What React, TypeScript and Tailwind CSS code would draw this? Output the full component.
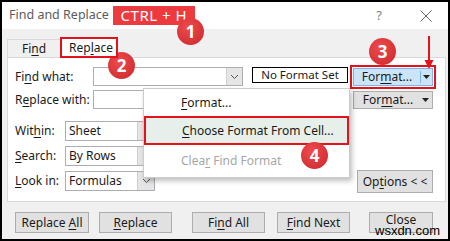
import React from 'react';

const U = ({ c }: { c: string }) => <span className="underline underline-offset-[2px]">{c}</span>;

const Chevron = () => (
  <svg width="9" height="6" viewBox="0 0 9 6" className="text-[#555]">
    <path d="M1 1 L4.5 4.5 L8 1" fill="none" stroke="currentColor" strokeWidth="1" />
  </svg>
);

const Caret = () => (
  <svg width="7" height="4" viewBox="0 0 7 4">
    <path d="M0 0 H7 L3.5 4 Z" fill="#222" />
  </svg>
);

interface IBtnProps {
  className: string;
  children: React.ReactNode;
}

const Btn = ({ className, children }: IBtnProps) => (
  <div className={`flex h-[21px] items-center justify-center border border-[#adadad] bg-[#e1e1e1] ${className}`}>
    <span>{children}</span>
  </div>
);

const Select = ({ value }: { value: string }) => (
  <div className="flex h-[20px] w-[90px] border border-[#abadb3] bg-white">
    <div className="flex-1 pl-[3px] leading-[18px]">{value}</div>
    <div className="flex w-[17px] items-center justify-center border-l border-[#cfcfcf] bg-[#e5e5e5]">
      <Chevron />
    </div>
  </div>
);

const Badge = ({ n, className }: { n: string; className: string }) => (
  <div
    className={`absolute flex h-[27px] w-[27px] items-center justify-center rounded-full bg-[radial-gradient(circle_at_40%_35%,#ef4a4c,#c9282d)] text-[17px] font-bold text-white ${className}`}
  >
    {n}
  </div>
);

const App = () => {
  return (
    <div className="relative h-[241px] w-[450px] overflow-hidden bg-white font-['Segoe_UI','Noto_Sans',sans-serif] text-[12px] text-[#1a1a1a]">
      <div className="flex h-[241px] w-[450px] flex-col border-2 border-black bg-[#f0f0f0]">
        {/* Title bar */}
        <div className="flex h-[27px] shrink-0 items-center bg-white pl-[7px] pr-[16px]">
          <span className="text-[12.5px] text-[#5c5c5c]">Find and Replace</span>
          <div className="ml-[4px] flex h-[19px] w-[82px] items-center justify-center bg-[#ec3a3e] text-[15px] tracking-[0.5px] text-white">
            CTRL + H
          </div>
          <span className="ml-auto text-[13px] text-[#808080]">?</span>
          <svg width="12" height="12" viewBox="0 0 12 12" className="ml-[38px]">
            <path d="M0.5 0.5 L11.5 11.5 M11.5 0.5 L0.5 11.5" stroke="#666" strokeWidth="1" />
          </svg>
        </div>

        {/* Tabs */}
        <div className="flex h-[28px] shrink-0 items-end pl-[5px]">
          <div className="flex h-[18px] w-[53px] items-center border-l border-t border-[#d9d9d9] pl-[14px]">
            <span>Fi<U c="n" />d</span>
          </div>
          <div className="relative z-10 -mb-[1px] flex h-[21px] w-[58px] items-center border-2 border-[#e3121b] bg-white pl-[7px]">
            <span>Rep<U c="l" />ace</span>
          </div>
        </div>

        {/* Panel */}
        <div className="ml-[5px] mr-[2px] flex h-[145px] shrink-0 justify-between border border-[#d9d9d9] bg-white pb-[8px] pl-[7px] pr-[12px] pt-[9px]">
          <div className="flex flex-col">
            <div className="flex h-[19px] items-start">
              <div className="w-[78px] leading-[19px]">Fi<U c="n" />d what:</div>
              <div className="flex h-[19px] w-[150px] border border-[#abadb3]">
                <div className="flex-1" />
                <div className="flex w-[16px] items-center justify-center border-l border-[#cfcfcf] bg-[#e5e5e5]">
                  <Chevron />
                </div>
              </div>
              <div className="ml-[9px] h-[16px] w-[96px] border border-black text-center text-[11.5px] leading-[14px]">No Format Set</div>
            </div>
            <div className="mt-[4px] flex h-[19px] items-start">
              <div className="w-[78px] leading-[19px]">R<U c="e" />place with:</div>
              <div className="h-[19px] w-[150px] border border-[#abadb3]" />
              <div className="ml-[9px] h-[16px] w-[96px] border border-black text-center text-[11.5px] leading-[14px]">No Format Set</div>
            </div>
            <div className="mt-[12px] flex items-center">
              <div className="w-[50px]">Wit<U c="h" />in:</div>
              <Select value="Sheet" />
            </div>
            <div className="mt-[5px] flex items-center">
              <div className="w-[50px]"><U c="S" />earch:</div>
              <Select value="By Rows" />
            </div>
            <div className="mt-[5px] flex items-center">
              <div className="w-[50px]"><U c="L" />ook in:</div>
              <Select value="Formulas" />
            </div>
          </div>

          <div className="flex flex-col items-end">
            <div className="mt-[1px] flex h-[18px] w-[80px] items-center border border-[#7eb4ea] bg-[#cce4f7] outline-2 outline-offset-1 outline-[#e3121b]">
              <div className="flex-1 text-center">For<U c="m" />at...</div>
              <div className="flex h-[12px] w-[12px] items-center justify-center border-l border-[#7eb4ea]">
                <Caret />
              </div>
            </div>
            <div className="mt-[5px] flex h-[18px] w-[80px] items-center border border-[#adadad] bg-[#e1e1e1]">
              <div className="flex-1 pl-[4px] text-center">For<U c="m" />at...</div>
              <div className="flex w-[14px] justify-center">
                <Caret />
              </div>
            </div>
            <Btn className="mt-auto h-[23px] w-[76px]">
              Op<U c="t" />ions &lt; &lt;
            </Btn>
          </div>
        </div>

        {/* Bottom buttons */}
        <div className="flex pl-[13px] pt-[10px]">
          <Btn className="w-[74px]">Replace <U c="A" />ll</Btn>
          <Btn className="ml-[10px] w-[73px]"><U c="R" />eplace</Btn>
          <Btn className="ml-[20px] w-[73px]">Fi<U c="n" />d All</Btn>
          <Btn className="ml-[12px] w-[73px]"><U c="F" />ind Next</Btn>
          <Btn className="ml-[19px] w-[64px] pb-[5px]">Close</Btn>
        </div>
      </div>

      {/* Format dropdown menu */}
      <div className="absolute left-[143px] top-[88px] flex w-[207px] flex-col border border-[#cccccc] bg-white shadow-[2px_3px_5px_rgba(0,0,0,0.25)]">
        <div className="flex h-[27px] items-center pl-[37px]">
          <span><U c="F" />ormat...</span>
        </div>
        <div className="flex h-[29px] items-center border-2 border-[#e3121b] bg-[#e6efea] pl-[36px]">
          <span><U c="C" />hoose Format From Cell...</span>
        </div>
        <div className="flex h-[32px] items-center pl-[37px] text-[#a6a6a6]">
          <span>Clea<U c="r" /> Find Format</span>
        </div>
      </div>

      {/* Step markers */}
      <Badge n="1" className="left-[177px] top-[18px]" />
      <Badge n="2" className="left-[108px] top-[52px]" />
      <Badge n="3" className="left-[369px] top-[38px]" />
      <Badge n="4" className="left-[301px] top-[142px]" />

      <svg width="10" height="34" viewBox="0 0 10 34" className="absolute left-[424px] top-[36px]">
        <path d="M5 0 V26" stroke="#e3121b" strokeWidth="2" />
        <path d="M0.5 24 H9.5 L5 33 Z" fill="#e3121b" />
      </svg>

      <div className="absolute left-[375px] top-[224px] font-['Liberation_Sans',Arial,sans-serif] text-[13px] leading-[14px] text-black">
        wsxdn.com
      </div>
    </div>
  );
};

export default App;
